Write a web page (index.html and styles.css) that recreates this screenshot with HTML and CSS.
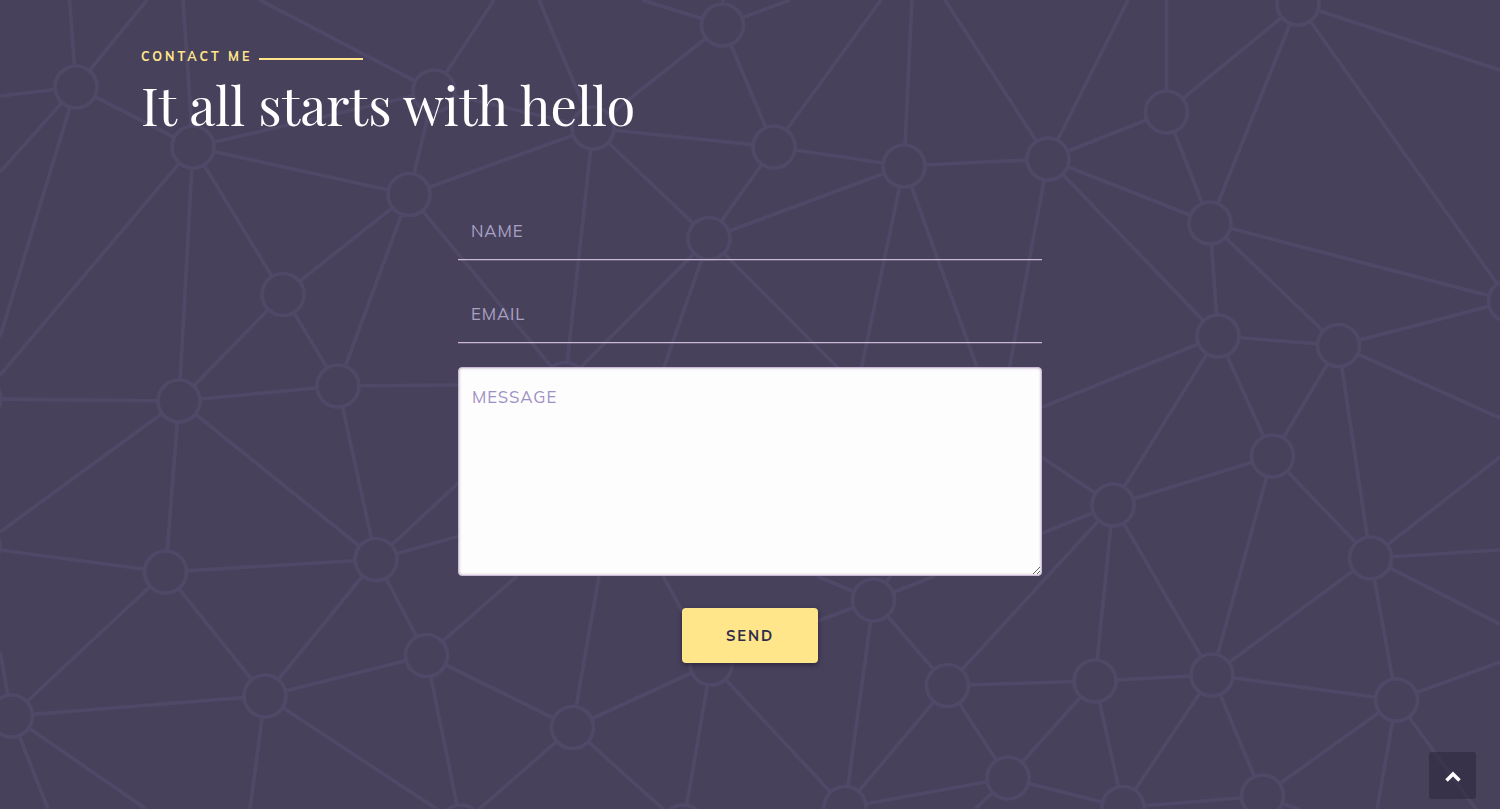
FILE: index.html
```
<!DOCTYPE html>
<html lang="en">
<head>
<meta charset="utf-8">
<title>Contact</title>
<link rel="stylesheet" href="styles.css">
</head>
<body>
<section class="contact">
  <svg class="network" viewBox="0 0 1500 809" aria-hidden="true">
    <path class="edges" d="M76 87L69.500 0M76 87L147 0M76 87L0 96M76 87L193 147M76 87L0 172M76 87L0 337
M193 147L183 0M193 147L434 91M193 147L409 194.500M193 147L0 375M193 147L179 401M193 147L283 294.500
M434 91L260 0M434 91L494 0M434 91L409 194.500M434 91L593 128M409 194.500L593 128M409 194.500L283 294.500M409 194.500L338 386M409 194.500L565 383
M283 294.500L338 386M283 294.500L179 401M338 386L179 401M338 386L565 384M338 386L376 559.500
M179 401L-20 399M179 401L376 559.500M179 401L165.500 572M179 401L0 532
M376 559.500L165.500 572M376 559.500L265 696M376 559.500L426.500 655.500M376 559.500L565 384M376 559.500L470 533
M165.500 572L0 550M165.500 572L11.500 716M165.500 572L265 696M11.500 716L0 651M11.500 716L48 809M11.500 716L146 809M11.500 716L265 696
M265 696L426.500 655.500M265 696L250 809M265 696L461 825M426.500 655.500L572.500 727.500M426.500 655.500L461 825M426.500 655.500L517 576
M572.500 727.500L599 576M572.500 727.500L711 664M572.500 727.500L461 825M572.500 727.500L683 827M711 664L663 576M711 664L683 827M711 664L845 807.500
M722.500 25L723 0M722.500 25L642 0M722.500 25L790 0M722.500 25L593 128M722.500 25L774 147
M593 128L539 0M593 128L774 147M593 128L709 238.500M593 128L565 383M774 147L881 0M774 147L904 166M774 147L709 238.500
M904 166L912 0M904 166L1048 159M904 166L709 238.500M904 166L861 370M904 166L978 370
M709 238.500L565 383M709 238.500L663 370M709 238.500L840 370
M1048 159L1128 0M1048 159L1166.500 112M1048 159L1210 223M1048 159L1218 336M1048 159L945 0M1048 159L1009 370
M1166.500 112L1166.500 0M1166.500 112L1298 4M1166.500 112L1210 223M1298 4L1500 70M1298 4L1210 223M1298 4L1509.500 301
M1210 223L1509.500 301M1210 223L1338.500 345.500M1210 223L1218 336M1218 336L1338.500 345.500M1218 336L1272.500 456M1218 336L1113 505M1218 336L1040 408
M1338.500 345.500L1509.500 301M1338.500 345.500L1500 418M1338.500 345.500L1272.500 456M1338.500 345.500L1370.500 558
M1272.500 456L1113 505M1272.500 456L1370.500 558M1272.500 456L1212 675
M1113 505L1040 456M1113 505L1040 534M1113 505L947.500 685.500M1113 505L1095 681M1113 505L1212 675
M1370.500 558L1500 457M1370.500 558L1500 550M1370.500 558L1500 624M1370.500 558L1212 675M1370.500 558L1396.500 700
M873.500 600L817 576M873.500 600L935 576M873.500 600L892 574M873.500 600L815 622M873.500 600L947.500 685.500M873.500 600L845 807.500
M947.500 685.500L1095 681M947.500 685.500L1008 778M947.500 685.500L845 807.500M1008 778L845 807.500M1008 778L1095 681M1008 778L1123 807.500M1008 778L975 809
M1095 681L1212 675M1095 681L1123 807.500M1212 675L1123 807.500M1212 675L1262.500 796M1212 675L1396.500 700
M1123 807.500L1262.500 796M1396.500 700L1262.500 796M1396.500 700L1377 809M1396.500 700L1500 662M1396.500 700L1478 812M1262.500 796L1303 811"/>
    <g class="nodes">
      <circle cx="76" cy="87" r="21"/><circle cx="193" cy="147" r="21"/><circle cx="434" cy="91" r="21"/>
      <circle cx="409" cy="194.500" r="21"/><circle cx="283" cy="294.500" r="21"/><circle cx="338" cy="386" r="21"/>
      <circle cx="179" cy="401" r="21"/><circle cx="-20" cy="399" r="21"/><circle cx="-21" cy="546" r="21"/>
      <circle cx="376" cy="559.500" r="21"/><circle cx="165.500" cy="572" r="21"/><circle cx="11.500" cy="716" r="21"/>
      <circle cx="265" cy="696" r="21"/><circle cx="426.500" cy="655.500" r="21"/><circle cx="572.500" cy="727.500" r="21"/>
      <circle cx="711" cy="664" r="21"/><circle cx="722.500" cy="25" r="21"/><circle cx="593" cy="128" r="21"/>
      <circle cx="774" cy="147" r="21"/><circle cx="904" cy="166" r="21"/><circle cx="709" cy="238.500" r="21"/>
      <circle cx="1048" cy="159" r="21"/><circle cx="1166.500" cy="112" r="21"/><circle cx="1298" cy="4" r="21"/>
      <circle cx="1210" cy="223" r="21"/><circle cx="1218" cy="336" r="21"/><circle cx="1338.500" cy="345.500" r="21"/>
      <circle cx="1509.500" cy="301" r="21"/><circle cx="1272.500" cy="456" r="21"/><circle cx="1113" cy="505" r="21"/>
      <circle cx="1370.500" cy="558" r="21"/><circle cx="873.500" cy="600" r="21"/><circle cx="947.500" cy="685.500" r="21"/>
      <circle cx="1095" cy="681" r="21"/><circle cx="1212" cy="675" r="21"/><circle cx="1396.500" cy="700" r="21"/>
      <circle cx="1008" cy="778" r="21"/><circle cx="1123" cy="807.500" r="21"/><circle cx="1262.500" cy="796" r="21"/>
      <circle cx="845" cy="807.500" r="21"/><circle cx="683" cy="826" r="21"/><circle cx="461" cy="826" r="21"/>
      <circle cx="565" cy="383.500" r="21"/>
    </g>
  </svg>
  <div class="content">
    <header class="heading">
      <p class="eyebrow"><span class="eyebrow-text">CONTACT ME</span><span class="rule"></span></p>
      <h2 class="title">It all starts with hello</h2>
    </header>
    <form class="form">
      <input class="field" type="text" placeholder="NAME" aria-label="Name">
      <input class="field" type="email" placeholder="EMAIL" aria-label="Email">
      <textarea class="message" placeholder="MESSAGE" aria-label="Message"></textarea>
      <button class="send" type="button">SEND</button>
    </form>
  </div>
  <a class="to-top" href="#" aria-label="Back to top">
    <svg class="chevron" viewBox="0 0 16 11"><path d="M1.500 9.500L8 3L14.500 9.500"/></svg>
  </a>
</section>
</body>
</html>
```

FILE: styles.css
```
* { box-sizing: border-box; }
body {
  margin: 0;
  background: #47415c;
  font-family: Mulish, Muli, Nunito, Lato, sans-serif;
}
.contact {
  position: relative;
  height: 809px;
  overflow: hidden;
}
.network {
  position: absolute;
  inset: 0;
  width: 1500px;
  height: 809px;
}
.edges { fill: none; stroke: #4f4967; stroke-width: 3.7; }
.nodes { fill: #47415c; stroke: #4f4967; stroke-width: 3.7; }
.content {
  position: relative;
  width: 1218px;
  margin: 0 auto;
  padding-top: 46px;
}
.eyebrow {
  display: flex;
  align-items: center;
  margin: 0;
  height: 20px;
  color: #ffe68a;
  font-size: 12.500px;
  font-weight: 700;
  line-height: 20px;
}
.eyebrow-text { width: 117.500px; letter-spacing: 3px; white-space: nowrap; }
.rule { width: 104px; height: 2px; margin-top: 6px; background: #ffe68a; }
.title {
  margin: 4px 0 0;
  height: 70px;
  color: #fff;
  font-family: "Playfair Display", "Liberation Serif", serif;
  font-size: 52.400px;
  font-weight: 400;
  line-height: 68px;
  white-space: nowrap;
}
.form {
  display: flex;
  flex-direction: column;
  width: 584px;
  margin: 62px auto 0;
}
.field {
  height: 58px;
  margin: 0 0 24.500px;
  padding: 0 13px;
  border: 0;
  border-bottom: 1px solid #cbb9d6;
  border-radius: 0;
  outline: 0;
  background: transparent;
  box-shadow: 0 1px 0 rgba(203, 185, 214, .25);
  font-family: inherit;
  font-size: 16.700px;
  font-weight: 400;
  letter-spacing: .9px;
}
.field::placeholder { color: #aaa1c4; }
.message {
  height: 209px;
  padding: 18px 13px;
  border: 1px solid #cbb9d6;
  border-radius: 4px;
  outline: 0;
  background: #fdfdfd;
  box-shadow: inset 0 0 3px #bdb0c5;
  font-family: inherit;
  font-size: 16.700px;
  font-weight: 400;
  line-height: 22px;
  letter-spacing: .9px;
}
.message::placeholder { color: #9d91c4; }
.send {
  align-self: center;
  width: 136px;
  height: 55px;
  margin-top: 32px;
  padding: 0;
  border: 0;
  border-radius: 4px;
  background: #ffe68a;
  box-shadow: 0 2px 5px rgba(20, 14, 36, .5);
  color: #302c49;
  font-family: inherit;
  font-size: 14.700px;
  font-weight: 700;
  letter-spacing: 1.9px;
}
.to-top {
  position: absolute;
  right: 24px;
  bottom: 10px;
  display: flex;
  align-items: center;
  justify-content: center;
  width: 47px;
  height: 47px;
  border-radius: 3px;
  background: rgba(40, 36, 54, .5);
}
.chevron { width: 16px; height: 11px; margin-top: 2px; }
.chevron path { fill: none; stroke: #fff; stroke-width: 3.5; }
```
